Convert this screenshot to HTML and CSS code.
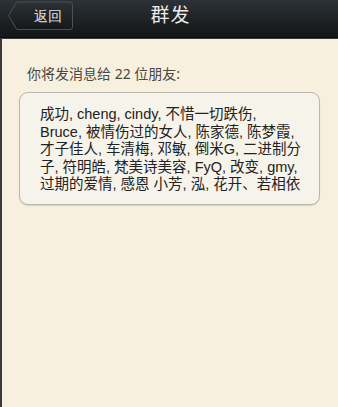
FILE: index.html
```html
<!DOCTYPE html>
<html>
<head>
<meta charset="utf-8">
<link rel="stylesheet" href="styles.css">
</head>
<body>
<div class="screen">
  <header class="topbar">
    <div class="left">
      <button class="back">
        <svg class="back-shape" width="66" height="30" viewBox="0 0 66 30">
          <defs>
            <linearGradient id="bg" x1="0" y1="0" x2="0" y2="1">
              <stop offset="0" stop-color="#2b3134"/>
              <stop offset="1" stop-color="#151819"/>
            </linearGradient>
          </defs>
          <path d="M0.5 14.5 L8.5 1.5 Q9 1 10 1 L62 1 Q64.5 1 64.5 3.5 L64.5 26 Q64.5 28.5 62 28.5 L10 28.5 Q9 28.5 8.5 28 Z" fill="url(#bg)" stroke="#4b5154" stroke-width="1"/>
        </svg>
        <span class="back-label">返回</span>
      </button>
    </div>
    <h1 class="title">群发</h1>
    <div class="right"></div>
  </header>
  <main class="content">
    <p class="label">你将发消息给 22 位朋友:</p>
    <div class="box">
      <div class="names">
        <span class="line">成功, cheng, cindy, 不惜一切跌伤,</span>
        <span class="line">Bruce, 被情伤过的女人, 陈家德, 陈梦霞,</span>
        <span class="line">才子佳人, 车清梅, 邓敏, 倒米G, 二进制分</span>
        <span class="line">子, 符明皓, 梵美诗美容, FyQ, 改变, gmy,</span>
        <span class="line">过期的爱情, 感恩 小芳, 泓, 花开、若相依</span>
      </div>
    </div>
  </main>
</div>
</body>
</html>
```
FILE: styles.css
```css
html, body {
  margin: 0;
  padding: 0;
}
body {
  width: 338px;
  height: 407px;
  overflow: hidden;
  font-family: "Noto Sans", "Noto Sans CJK SC", sans-serif;
  background: #f8f0df;
}
.screen {
  display: flex;
  flex-direction: column;
  height: 407px;
}
.topbar {
  height: 37px;
  flex: none;
  display: grid;
  grid-template-columns: 1fr auto 1fr;
  align-items: start;
  background: linear-gradient(#2c3236, #1c2022 60%, #141717);
  border-bottom: 1px solid #0b0c0c;
  box-shadow: 0 1px 0 #3a3d3b;
}
.left {
  padding-left: 8px;
  padding-top: 1px;
}
.back {
  position: relative;
  width: 66px;
  height: 30px;
  padding: 0;
  border: 0;
  background: none;
  display: flex;
  align-items: center;
  justify-content: flex-end;
  cursor: pointer;
}
.back-shape {
  position: absolute;
  left: 0;
  top: 0;
}
.back-label {
  position: relative;
  font-size: 14px;
  color: #e4e4e4;
  padding-right: 12px;
  line-height: 28px;
}
.title {
  margin: 0;
  font-size: 19px;
  font-weight: normal;
  color: #ececec;
  line-height: 30px;
  letter-spacing: 1px;
  padding-left: 3px;
}
.content {
  flex: 1;
  border-left: 2px solid #3a3a3a;
  padding: 26px 15px 0 17px;
}
.label {
  margin: 0;
  font-size: 14px;
  line-height: 20px;
  color: #4a4640;
  padding-left: 8px;
}
.box {
  margin-top: 8px;
  width: 301px;
  height: 113px;
  box-sizing: border-box;
  border: 1px solid #b9b7ad;
  border-radius: 9px;
  background: #f5f3ea;
  box-shadow: 0 1px 1px rgba(0,0,0,0.12);
  padding: 13px 0 0 20px;
}
.names {
  display: flex;
  flex-direction: column;
  font-family: "Liberation Sans", "Noto Sans CJK SC", sans-serif;
  font-size: 14.5px;
  color: #222;
  white-space: nowrap;
}
.line {
  display: block;
  height: 17.5px;
  line-height: 17.5px;
}
```
